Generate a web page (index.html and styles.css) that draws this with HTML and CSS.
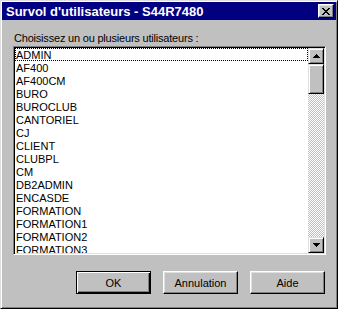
FILE: index.html
```html
<!DOCTYPE html>
<html lang="fr">
<head>
    <meta charset="UTF-8">
    <title>Survol d'utilisateurs - S44R7480</title>
    <link rel="stylesheet" href="styles.css">
</head>
<body>
    <div class="fenetre">
        <div class="titre">
            <span class="titre-texte">Survol d'utilisateurs - S44R7480</span>
            <button class="fermer">
                <svg width="8" height="7" viewBox="0 0 8 7" shape-rendering="crispEdges">
                    <path d="M0 0h2v1h-2zM6 0h2v1h-2zM1 1h2v1h-2zM5 1h2v1h-2zM2 2h4v1h-4zM3 3h2v1h-2zM2 4h4v1h-4zM1 5h2v1h-2zM5 5h2v1h-2zM0 6h2v1h-2zM6 6h2v1h-2z" fill="#000"/>
                </svg>
            </button>
        </div>
        <div class="contenu">
            <div class="etiquette">Choisissez un ou plusieurs utilisateurs :</div>
            <div class="liste">
                <div class="elements">
                    <div class="element focus">ADMIN</div>
                    <div class="element">AF400</div>
                    <div class="element">AF400CM</div>
                    <div class="element">BURO</div>
                    <div class="element">BUROCLUB</div>
                    <div class="element">CANTORIEL</div>
                    <div class="element">CJ</div>
                    <div class="element">CLIENT</div>
                    <div class="element">CLUBPL</div>
                    <div class="element">CM</div>
                    <div class="element">DB2ADMIN</div>
                    <div class="element">ENCASDE</div>
                    <div class="element">FORMATION</div>
                    <div class="element">FORMATION1</div>
                    <div class="element">FORMATION2</div>
                    <div class="element">FORMATION3</div>
                </div>
                <div class="defilement">
                    <div class="fleche">
                        <svg width="7" height="4" viewBox="0 0 7 4" shape-rendering="crispEdges">
                            <path d="M3 0h1v1h-1zM2 1h3v1h-3zM1 2h5v1h-5zM0 3h7v1h-7z" fill="#000"/>
                        </svg>
                    </div>
                    <div class="curseur"></div>
                    <div class="piste"></div>
                    <div class="fleche">
                        <svg width="7" height="4" viewBox="0 0 7 4" shape-rendering="crispEdges">
                            <path d="M0 0h7v1h-7zM1 1h5v1h-5zM2 2h3v1h-3zM3 3h1v1h-1z" fill="#000"/>
                        </svg>
                    </div>
                </div>
            </div>
            <div class="boutons">
                <button class="bouton defaut">OK</button>
                <button class="bouton">Annulation</button>
                <button class="bouton">Aide</button>
            </div>
        </div>
    </div>
</body>
</html>
```

FILE: styles.css
```css
body {
    margin: 0;
    background-color: #c0c0c0;
}

.fenetre {
    box-sizing: border-box;
    width: 338px;
    height: 309px;
    padding: 1px;
    background-color: #c0c0c0;
    border: 1px solid;
    border-color: #dfdfdf #000 #000 #dfdfdf;
    box-shadow: inset 1px 1px #fff, inset -1px -1px #808080;
    font-family: "Liberation Sans", Arial, sans-serif;
    font-size: 11px;
    color: #000;
}

/* Barre de titre */
.titre {
    display: flex;
    align-items: center;
    height: 18px;
    padding: 0 2px 0 4px;
    background-color: #000080;
}

.titre-texte {
    flex: 1;
    color: white;
    font-weight: bold;
    font-size: 13px;
    white-space: nowrap;
}

.fermer {
    display: flex;
    align-items: center;
    justify-content: center;
    box-sizing: border-box;
    width: 16px;
    height: 14px;
    padding: 0;
    background-color: #c0c0c0;
    border: 1px solid;
    border-color: #fff #000 #000 #fff;
    box-shadow: inset -1px -1px #808080, inset 1px 1px #dfdfdf;
}

.contenu {
    padding: 12px 10px 0 11px;
}

.etiquette {
    height: 13px;
    line-height: 13px;
    padding-left: 1px;
    margin-bottom: 1px;
    letter-spacing: -0.2px;
}

/* Liste des utilisateurs */
.liste {
    display: flex;
    box-sizing: border-box;
    height: 209px;
    padding: 1px;
    background-color: white;
    border: 1px solid;
    border-color: #808080 #fff #fff #808080;
    box-shadow: inset 1px 1px #000, inset -1px -1px #dfdfdf;
}

.elements {
    flex: 1;
    overflow: hidden;
}

.element {
    height: 13px;
    line-height: 15px;
    padding-left: 1px;
    white-space: nowrap;
    overflow: hidden;
}

.element.focus {
    box-sizing: border-box;
    outline: 1px dotted #000;
    outline-offset: -1px;
}

.defilement {
    display: flex;
    flex-direction: column;
    width: 16px;
}

.fleche,
.curseur {
    box-sizing: border-box;
    background-color: #c0c0c0;
    border: 1px solid;
    border-color: #dfdfdf #000 #000 #dfdfdf;
    box-shadow: inset 1px 1px #fff, inset -1px -1px #808080;
}

.fleche {
    display: flex;
    align-items: center;
    justify-content: center;
    height: 16px;
}

.curseur {
    height: 30px;
}

.piste {
    flex: 1;
    background: repeating-conic-gradient(#c0c0c0 0 25%, #fff 0 50%) 0 0 / 2px 2px;
}

/* Boutons */
.boutons {
    display: flex;
    justify-content: flex-end;
    gap: 12px;
    margin-top: 16px;
    padding-right: 1px;
}

.bouton {
    box-sizing: border-box;
    width: 75px;
    height: 23px;
    padding: 0;
    background-color: #c0c0c0;
    border: 1px solid;
    border-color: #fff #000 #000 #fff;
    box-shadow: inset -1px -1px #808080, inset 1px 1px #dfdfdf;
    font-family: "Liberation Sans", Arial, sans-serif;
    font-size: 11px;
    color: #000;
}

.bouton.defaut {
    border-color: #000;
    box-shadow: inset 1px 1px #fff, inset -1px -1px #000, inset -2px -2px #808080;
}
```
